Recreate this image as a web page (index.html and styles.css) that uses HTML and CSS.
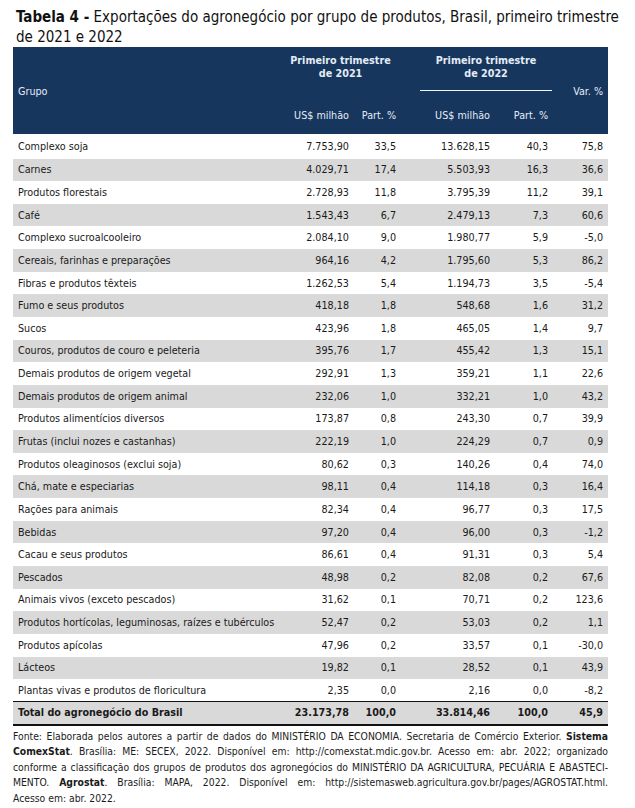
FILE: index.html
```html
<!DOCTYPE html>
<html lang="pt-BR">
<head>
<meta charset="utf-8">
<title>Tabela 4</title>
<link rel="stylesheet" href="styles.css">
</head>
<body>
<div class="page">
  <h1 class="title"><b>Tabela 4 -</b> Exportações do agronegócio por grupo de produtos, Brasil, primeiro trimestre de 2021 e 2022</h1>
  <table class="tbl">
    <colgroup>
      <col class="c1"><col class="c2"><col class="c3"><col class="c4"><col class="c5"><col class="c6">
    </colgroup>
    <thead>
      <tr class="h1">
        <th rowspan="2" class="grupo">Grupo</th>
        <th colspan="2" class="period"><div class="ptext">Primeiro trimestre<br>de 2021</div></th>
        <th colspan="2" class="period"><div class="ptext line">Primeiro trimestre<br>de 2022</div></th>
        <th rowspan="2" class="var">Var. %</th>
      </tr>
      <tr class="h2">
        <th class="num">US$ milhão</th>
        <th class="num">Part. %</th>
        <th class="num">US$ milhão</th>
        <th class="num">Part. %</th>
      </tr>
    </thead>
    <tbody>
      <tr class="first"><td>Complexo soja</td><td>7.753,90</td><td>33,5</td><td>13.628,15</td><td>40,3</td><td>75,8</td></tr>
      <tr class="alt"><td>Carnes</td><td>4.029,71</td><td>17,4</td><td>5.503,93</td><td>16,3</td><td>36,6</td></tr>
      <tr><td>Produtos florestais</td><td>2.728,93</td><td>11,8</td><td>3.795,39</td><td>11,2</td><td>39,1</td></tr>
      <tr class="alt"><td>Café</td><td>1.543,43</td><td>6,7</td><td>2.479,13</td><td>7,3</td><td>60,6</td></tr>
      <tr><td>Complexo sucroalcooleiro</td><td>2.084,10</td><td>9,0</td><td>1.980,77</td><td>5,9</td><td>-5,0</td></tr>
      <tr class="alt"><td>Cereais, farinhas e preparações</td><td>964,16</td><td>4,2</td><td>1.795,60</td><td>5,3</td><td>86,2</td></tr>
      <tr><td>Fibras e produtos têxteis</td><td>1.262,53</td><td>5,4</td><td>1.194,73</td><td>3,5</td><td>-5,4</td></tr>
      <tr class="alt"><td>Fumo e seus produtos</td><td>418,18</td><td>1,8</td><td>548,68</td><td>1,6</td><td>31,2</td></tr>
      <tr><td>Sucos</td><td>423,96</td><td>1,8</td><td>465,05</td><td>1,4</td><td>9,7</td></tr>
      <tr class="alt"><td>Couros, produtos de couro e peleteria</td><td>395,76</td><td>1,7</td><td>455,42</td><td>1,3</td><td>15,1</td></tr>
      <tr><td>Demais produtos de origem vegetal</td><td>292,91</td><td>1,3</td><td>359,21</td><td>1,1</td><td>22,6</td></tr>
      <tr class="alt"><td>Demais produtos de origem animal</td><td>232,06</td><td>1,0</td><td>332,21</td><td>1,0</td><td>43,2</td></tr>
      <tr><td>Produtos alimentícios diversos</td><td>173,87</td><td>0,8</td><td>243,30</td><td>0,7</td><td>39,9</td></tr>
      <tr class="alt"><td>Frutas (inclui nozes e castanhas)</td><td>222,19</td><td>1,0</td><td>224,29</td><td>0,7</td><td>0,9</td></tr>
      <tr><td>Produtos oleaginosos (exclui soja)</td><td>80,62</td><td>0,3</td><td>140,26</td><td>0,4</td><td>74,0</td></tr>
      <tr class="alt"><td>Chá, mate e especiarias</td><td>98,11</td><td>0,4</td><td>114,18</td><td>0,3</td><td>16,4</td></tr>
      <tr><td>Rações para animais</td><td>82,34</td><td>0,4</td><td>96,77</td><td>0,3</td><td>17,5</td></tr>
      <tr class="alt"><td>Bebidas</td><td>97,20</td><td>0,4</td><td>96,00</td><td>0,3</td><td>-1,2</td></tr>
      <tr><td>Cacau e seus produtos</td><td>86,61</td><td>0,4</td><td>91,31</td><td>0,3</td><td>5,4</td></tr>
      <tr class="alt"><td>Pescados</td><td>48,98</td><td>0,2</td><td>82,08</td><td>0,2</td><td>67,6</td></tr>
      <tr><td>Animais vivos (exceto pescados)</td><td>31,62</td><td>0,1</td><td>70,71</td><td>0,2</td><td>123,6</td></tr>
      <tr class="alt"><td>Produtos hortícolas, leguminosas, raízes e tubérculos</td><td>52,47</td><td>0,2</td><td>53,03</td><td>0,2</td><td>1,1</td></tr>
      <tr><td>Produtos apícolas</td><td>47,96</td><td>0,2</td><td>33,57</td><td>0,1</td><td>-30,0</td></tr>
      <tr class="alt"><td>Lácteos</td><td>19,82</td><td>0,1</td><td>28,52</td><td>0,1</td><td>43,9</td></tr>
      <tr><td>Plantas vivas e produtos de floricultura</td><td>2,35</td><td>0,0</td><td>2,16</td><td>0,0</td><td>-8,2</td></tr>
      <tr class="total"><td>Total do agronegócio do Brasil</td><td>23.173,78</td><td>100,0</td><td>33.814,46</td><td>100,0</td><td>45,9</td></tr>
    </tbody>
  </table>
  <div class="source">
    <span class="jl">Fonte: Elaborada pelos autores a partir de dados do MINISTÉRIO DA ECONOMIA. Secretaria de Comércio Exterior. <b>Sistema</b></span>
    <span class="jl"><b>ComexStat</b>. Brasília: ME: SECEX, 2022. Disponível em: http://comexstat.mdic.gov.br. Acesso em: abr. 2022; organizado</span>
    <span class="jl">conforme a classificação dos grupos de produtos dos agronegócios do MINISTÉRIO DA AGRICULTURA, PECUÁRIA E ABASTECI-</span>
    <span class="jl">MENTO. <b>Agrostat</b>. Brasília: MAPA, 2022. Disponível em: http://sistemasweb.agricultura.gov.br/pages/AGROSTAT.html.</span>
    <span class="last">Acesso em: abr. 2022.</span>
  </div>
</div>
</body>
</html>
```
FILE: styles.css
```css
html, body {
  margin: 0;
  padding: 0;
  background: #ffffff;
}
body {
  font-family: "DejaVu Sans Condensed", "DejaVu Sans", sans-serif;
  font-stretch: condensed;
  color: #1a1a1a;
}
.page {
  width: 595px;
  padding: 7px 0 0 13px;
}
.title {
  margin: 0 0 0 3px;
  font-size: 15px;
  line-height: 20px;
  font-weight: normal;
  color: #111;
  width: 606px;
}
.title b {
  font-weight: bold;
}
.tbl {
  width: 595px;
  border-collapse: collapse;
  table-layout: fixed;
  font-size: 10.7px;
}
.c1 { width: 267px; }
.c2 { width: 74px; }
.c3 { width: 47px; }
.c4 { width: 94px; }
.c5 { width: 58px; }
.c6 { width: 55px; }
.tbl thead th {
  background: #17365d;
  color: #e4ecf6;
  font-weight: normal;
  padding: 0;
}
.h1 { height: 50px; }
.h2 { height: 37px; }
.grupo {
  text-align: left;
  padding: 2px 0 0 5px !important;
  vertical-align: middle;
}
.var {
  text-align: right;
  padding: 2px 5px 0 0 !important;
  vertical-align: middle;
}
.period {
  vertical-align: top;
  padding-top: 7px !important;
}
.ptext {
  font-weight: bold;
  line-height: 13px;
  text-align: center;
  padding-bottom: 10px;
}
.ptext.line {
  margin: 0 1px 0 19px;
  border-bottom: 1px solid #f0f4fa;
}
.h2 th.num {
  text-align: right;
  padding: 0 5px 0 0;
  vertical-align: middle;
}
.tbl tbody tr {
  height: 22.65px;
}
.tbl tbody tr.first td {
  height: 23.5px;
  padding-top: 1px;
}
.tbl tbody td {
  padding: 0 5px;
  white-space: nowrap;
  text-align: right;
  vertical-align: middle;
}
.tbl tbody td:first-child {
  text-align: left;
}
.tbl tbody tr.alt td {
  background: #d9d9d9;
}
.tbl tbody tr.total td {
  background: #d9d9d9;
  font-weight: bold;
  border-top: 1.5px solid #111;
  border-bottom: 2px solid #111;
  height: 19px;
}
.source {
  font-size: 10.3px;
  line-height: 15.6px;
  color: #1a1a1a;
  margin-top: 3px;
}
.source .jl {
  display: block;
  text-align: justify;
  text-align-last: justify;
}
.source .last {
  display: block;
}
```
